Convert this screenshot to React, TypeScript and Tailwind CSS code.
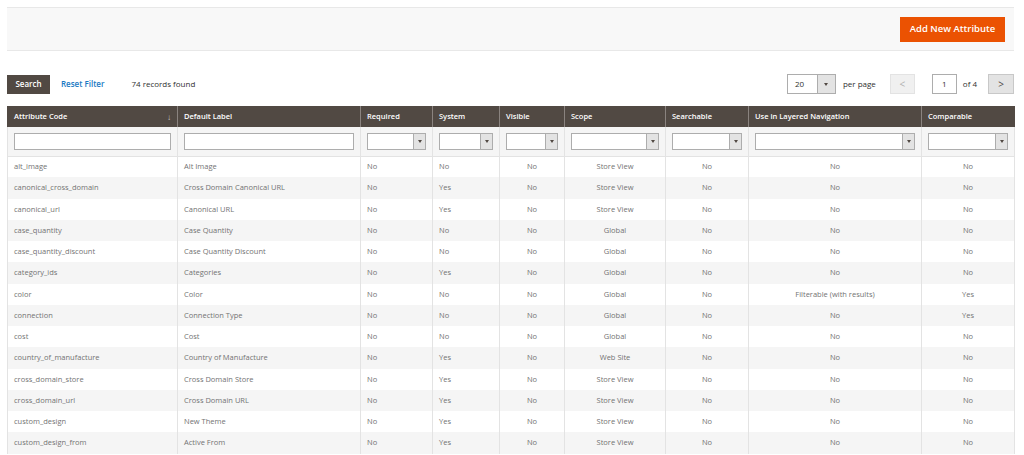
import React from "react";

type Row = {
  code: string;
  label: string;
  required: string;
  system: string;
  visible: string;
  scope: string;
  searchable: string;
  layered: string;
  comparable: string;
};

const ROWS: Row[] = [
  { code: "alt_image", label: "Alt Image", required: "No", system: "No", visible: "No", scope: "Store View", searchable: "No", layered: "No", comparable: "No" },
  { code: "canonical_cross_domain", label: "Cross Domain Canonical URL", required: "No", system: "Yes", visible: "No", scope: "Store View", searchable: "No", layered: "No", comparable: "No" },
  { code: "canonical_url", label: "Canonical URL", required: "No", system: "Yes", visible: "No", scope: "Store View", searchable: "No", layered: "No", comparable: "No" },
  { code: "case_quantity", label: "Case Quantity", required: "No", system: "No", visible: "No", scope: "Global", searchable: "No", layered: "No", comparable: "No" },
  { code: "case_quantity_discount", label: "Case Quantity Discount", required: "No", system: "No", visible: "No", scope: "Global", searchable: "No", layered: "No", comparable: "No" },
  { code: "category_ids", label: "Categories", required: "No", system: "Yes", visible: "No", scope: "Global", searchable: "No", layered: "No", comparable: "No" },
  { code: "color", label: "Color", required: "No", system: "No", visible: "No", scope: "Global", searchable: "No", layered: "Filterable (with results)", comparable: "Yes" },
  { code: "connection", label: "Connection Type", required: "No", system: "No", visible: "No", scope: "Global", searchable: "No", layered: "No", comparable: "Yes" },
  { code: "cost", label: "Cost", required: "No", system: "No", visible: "No", scope: "Global", searchable: "No", layered: "No", comparable: "No" },
  { code: "country_of_manufacture", label: "Country of Manufacture", required: "No", system: "Yes", visible: "No", scope: "Web Site", searchable: "No", layered: "No", comparable: "No" },
  { code: "cross_domain_store", label: "Cross Domain Store", required: "No", system: "Yes", visible: "No", scope: "Store View", searchable: "No", layered: "No", comparable: "No" },
  { code: "cross_domain_url", label: "Cross Domain URL", required: "No", system: "Yes", visible: "No", scope: "Store View", searchable: "No", layered: "No", comparable: "No" },
  { code: "custom_design", label: "New Theme", required: "No", system: "Yes", visible: "No", scope: "Store View", searchable: "No", layered: "No", comparable: "No" },
  { code: "custom_design_from", label: "Active From", required: "No", system: "Yes", visible: "No", scope: "Store View", searchable: "No", layered: "No", comparable: "No" },
];

const COLS = [
  { title: "Attribute Code", w: "w-[170px]", filter: "text" },
  { title: "Default Label", w: "w-[183px]", filter: "text" },
  { title: "Required", w: "w-[72px]", filter: "select" },
  { title: "System", w: "w-[67px]", filter: "select" },
  { title: "Visible", w: "w-[65px]", filter: "select" },
  { title: "Scope", w: "w-[101px]", filter: "select" },
  { title: "Searchable", w: "w-[83px]", filter: "select" },
  { title: "Use in Layered Navigation", w: "w-[173px]", filter: "select" },
  { title: "Comparable", w: "w-[93px]", filter: "select" },
];

function SelectFilter() {
  return (
    <div className="flex h-[17px] w-full border border-[#adadad] bg-white">
      <div className="flex-1" />
      <div className="flex w-[12px] items-center justify-center border-l border-[#adadad] bg-[#e3e3e3]">
        <span className="block h-0 w-0 border-x-[2.5px] border-t-[3px] border-x-transparent border-t-[#514943]" />
      </div>
    </div>
  );
}

export default function App() {
  return (
    <div className="h-[455px] w-[1024px] overflow-hidden bg-white pl-[7px] pr-[10px] pt-[7px] font-['Open_Sans',sans-serif] text-[#303030]">
      {/* page actions bar */}
      <div className="flex h-[44px] items-center justify-end border-y border-[#e8e8e8] bg-[#f8f8f8] pr-[9px]">
        <button className="h-[25px] w-[105px] bg-[#eb5202] text-[9.5px] font-semibold text-white">
          Add New Attribute
        </button>
      </div>

      {/* grid toolbar */}
      <div className="mt-[23px] flex h-[20px] items-center">
        <button className="h-[19px] w-[43px] bg-[#514943] text-[8px] font-semibold text-white">
          Search
        </button>
        <span className="ml-[11px] text-[8px] font-semibold text-[#1979c3]">Reset Filter</span>
        <span className="ml-[27px] text-[8px] text-[#303030]">74 records found</span>

        <div className="ml-auto flex items-center">
          <div className="flex h-[20px] w-[49px] border border-[#adadad] bg-white">
            <span className="flex flex-1 items-center pl-[7px] text-[8px] text-[#303030]">20</span>
            <span className="flex w-[18px] items-center justify-center border-l border-[#adadad] bg-[#e3e3e3]">
              <span className="block h-0 w-0 border-x-[2.5px] border-t-[3px] border-x-transparent border-t-[#514943]" />
            </span>
          </div>
          <span className="ml-[7px] text-[8px] text-[#303030]">per page</span>
          <span className="ml-[14px] flex h-[20px] w-[25px] items-center justify-center border border-[#e3e3e3] bg-[#f0f0f0] text-[10px] text-[#b0b0b0]">
            &lt;
          </span>
          <span className="ml-[17px] flex h-[20px] w-[25px] items-center justify-center border border-[#adadad] bg-white text-[8px] text-[#303030]">
            1
          </span>
          <span className="ml-[6px] text-[8px] text-[#303030]">of 4</span>
          <span className="ml-[11px] flex h-[20px] w-[26px] items-center justify-center border border-[#c8c8c8] bg-[#e3e3e3] text-[10px] text-[#514943]">
            &gt;
          </span>
        </div>
      </div>

      {/* grid */}
      <table className="mt-[12px] w-[1007px] table-fixed border-collapse text-left">
        <thead>
          <tr className="h-[21px] bg-[#514943]">
            {COLS.map((c, i) => (
              <th
                key={c.title}
                className={`${c.w} border-x border-[#8a837f] px-[6px] text-[7.5px] font-semibold text-white first:border-l-[#514943] last:border-r-[#514943]`}
              >
                <div className="flex items-center justify-between">
                  <span>{c.title}</span>
                  {i === 0 && <span className="text-[8px] font-normal text-[#d0ccc9]">↓</span>}
                </div>
              </th>
            ))}
          </tr>
          <tr className="h-[29px] border-b border-[#e3e3e3] bg-[#f5f5f5]">
            {COLS.map((c) => (
              <td key={c.title} className="border-x border-[#e3e3e3] px-[6px]">
                {c.filter === "text" ? (
                  <div className="h-[17px] w-full border border-[#adadad] bg-white" />
                ) : (
                  <SelectFilter />
                )}
              </td>
            ))}
          </tr>
        </thead>
        <tbody>
          {ROWS.map((r, i) => (
            <tr key={r.code} className={`h-[21.25px] text-[7.5px] text-[#737373] ${i % 2 === 1 ? "bg-[#f5f5f5]" : "bg-white"}`}>
              <td className="border-x border-[#e3e3e3] px-[6px]">{r.code}</td>
              <td className="border-x border-[#e3e3e3] px-[6px]">{r.label}</td>
              <td className="border-x border-[#e3e3e3] px-[6px]">{r.required}</td>
              <td className="border-x border-[#e3e3e3] px-[6px]">{r.system}</td>
              <td className="border-x border-[#e3e3e3] px-[6px] text-center">{r.visible}</td>
              <td className="border-x border-[#e3e3e3] px-[6px] text-center">{r.scope}</td>
              <td className="border-x border-[#e3e3e3] px-[6px] text-center">{r.searchable}</td>
              <td className="border-x border-[#e3e3e3] px-[6px] text-center">{r.layered}</td>
              <td className="border-x border-[#e3e3e3] px-[6px] text-center">{r.comparable}</td>
            </tr>
          ))}
        </tbody>
      </table>
    </div>
  );
}
